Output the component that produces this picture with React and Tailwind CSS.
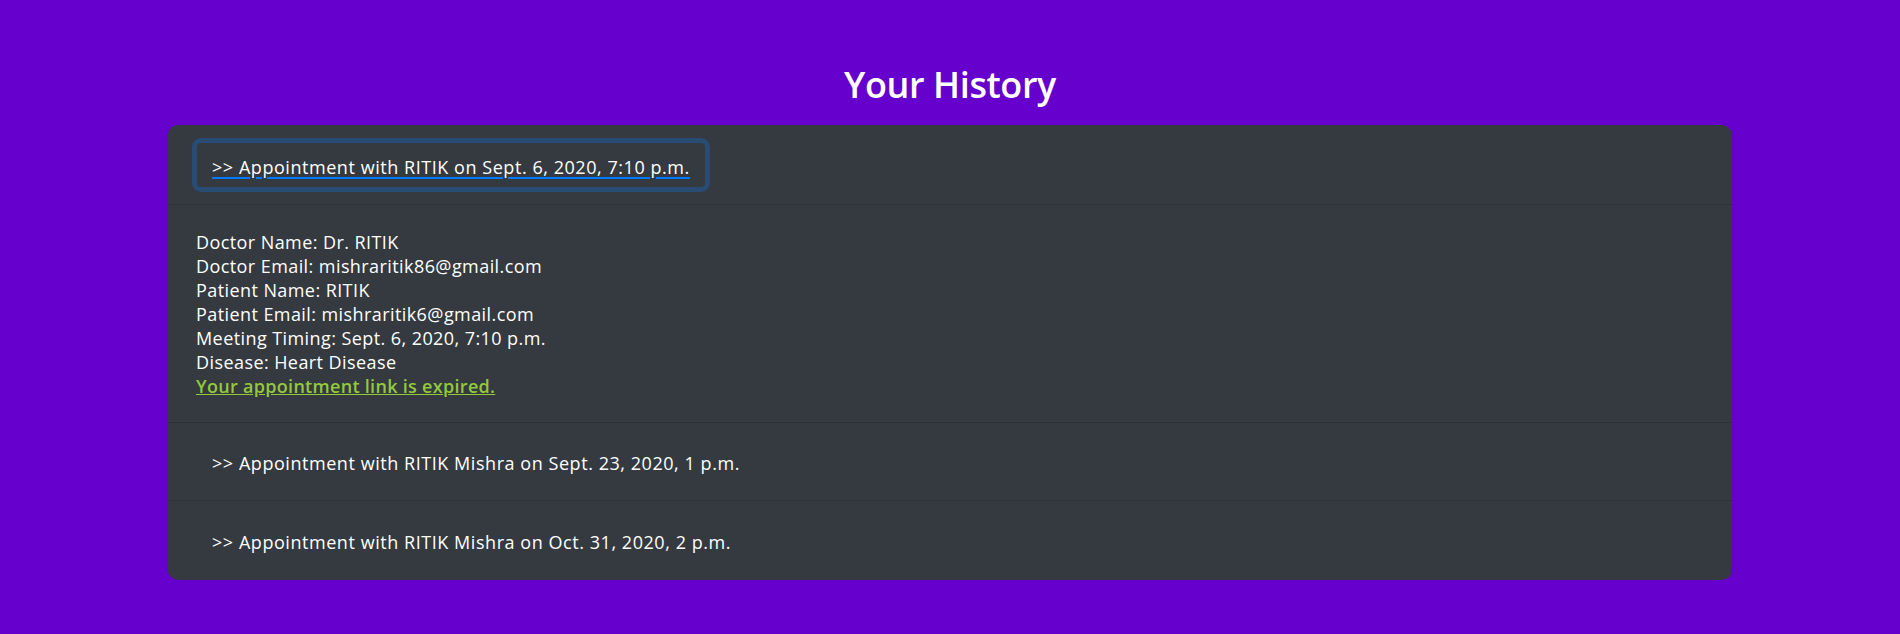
const details = [
  'Doctor Name: Dr. RITIK',
  'Doctor Email: mishraritik86@gmail.com',
  'Patient Name: RITIK',
  'Patient Email: mishraritik6@gmail.com',
  'Meeting Timing: Sept. 6, 2020, 7:10 p.m.',
  'Disease: Heart Disease',
]

export default function App() {
  return (
    <div
      className="min-h-screen bg-[#6600cc] pt-[61px] pb-10 text-white"
      style={{ fontFamily: '"Open Sans", "Noto Sans", sans-serif' }}
    >
      {/* Title */}
      <h1 className="text-center text-[36px] leading-[48px] font-semibold tracking-[-0.4px] mb-4">Your History</h1>

      {/* History accordion */}
      <div className="mx-[168px] rounded-[10px] bg-[#343a40] overflow-hidden text-[18px] leading-6 tracking-[0.42px]">

        {/* ── Open item ── */}
        <div className="h-[80px] flex items-center pl-[24px] border-b border-[#2c3136]">
          <button className="h-[54px] pt-1 px-[15px] border-[5px] border-[#284c73] rounded-[9px] text-white tracking-[0.55px] underline decoration-[#007bff] decoration-2 underline-offset-[3px]">
            &gt;&gt; Appointment with RITIK on Sept. 6, 2020, 7:10 p.m.
          </button>
        </div>

        <div className="h-[218px] pt-[25px] pl-[28px] border-b border-[#2c3136]">
          {details.map((line) => (
            <p key={line}>{line}</p>
          ))}
          <a href="#" className="text-[#94c93c] font-semibold underline tracking-[0.3px]">
            Your appointment link is expired.
          </a>
        </div>

        {/* ── Collapsed items ── */}
        <div className="h-[78px] flex items-center pl-[44px] pt-[2px] border-b border-[#2c3136]">
          <button className="text-white tracking-[0.55px]">&gt;&gt; Appointment with RITIK Mishra on Sept. 23, 2020, 1 p.m.</button>
        </div>
        <div className="h-[79px] flex items-center pl-[44px] pt-[2px]">
          <button className="text-white tracking-[0.55px]">&gt;&gt; Appointment with RITIK Mishra on Oct. 31, 2020, 2 p.m.</button>
        </div>

      </div>
    </div>
  )
}
